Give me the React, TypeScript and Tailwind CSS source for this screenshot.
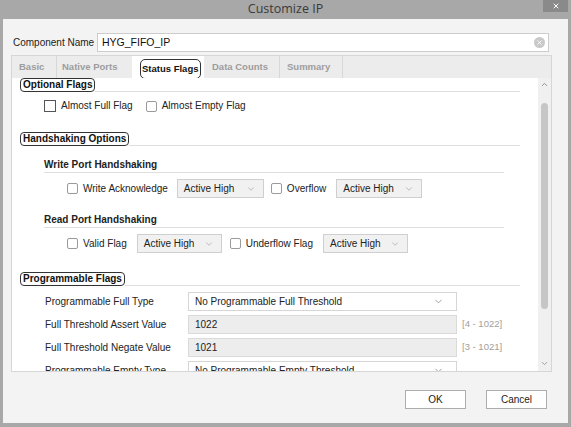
import { ChevronDown, ChevronUp, X } from 'lucide-react';

const font = { fontFamily: '"Liberation Sans", Arial, sans-serif' };

function Check({ dark = false, label }: { dark?: boolean; label: string }) {
  return (
    <div className="flex items-center gap-[5px] whitespace-nowrap">
      <span
        className={
          dark
            ? 'w-[12px] h-[12px] border border-[#555] bg-white'
            : 'w-[11px] h-[11px] border border-[#9a9a9a] rounded-[2px] bg-white'
        }
      />
      <span className="text-[10px] leading-[12px] text-[#222]">{label}</span>
    </div>
  );
}

function Select({ value, w }: { value: string; w: string }) {
  return (
    <div className={`${w} h-[19px] flex items-center justify-between border border-[#cfcfcf] bg-[#f1f1f1] pl-[6px] pr-[7px]`}>
      <span className="text-[10px] text-[#222] whitespace-nowrap">{value}</span>
      <ChevronDown className="w-[10px] h-[10px] text-[#9a9a9a]" strokeWidth={1.5} />
    </div>
  );
}

function SectionLabel({ children }: { children: string }) {
  return (
    <div className="flex items-end h-[14px]">
      <span className="border-[1.5px] border-[#333] rounded-[4px] px-[2px] h-[14px] flex items-center text-[10px] font-bold text-[#111] leading-none whitespace-nowrap">
        {children}
      </span>
      <div className="flex-1 h-px bg-[#dedede] mr-[18px]" />
    </div>
  );
}

function SubHeader({ children }: { children: string }) {
  return (
    <div className="ml-[24px] mr-[34px] border-b border-[#dedede] pb-[1px] text-[10px] leading-[12px] font-bold text-[#222] whitespace-nowrap">
      {children}
    </div>
  );
}

function FieldRow({ label, children, hint }: { label: string; children: React.ReactNode; hint?: string }) {
  return (
    <div className="flex items-center pl-[25px]">
      <span className="w-[143px] text-[10px] text-[#222] whitespace-nowrap">{label}</span>
      {children}
      {hint && <span className="ml-[5px] text-[9.5px] text-[#a0a0a0] whitespace-nowrap">{hint}</span>}
    </div>
  );
}

function ValueBox({ value }: { value: string }) {
  return (
    <div className="w-[269px] h-[19px] border border-[#dadada] bg-[#ededed] flex items-center pl-[6px] text-[10px] text-[#222]">
      {value}
    </div>
  );
}

function TypeSelect({ value }: { value: string }) {
  return (
    <div className="w-[269px] h-[19px] border border-[#d6d6d6] bg-white flex items-center justify-between pl-[6px] pr-[12px]">
      <span className="text-[10px] text-[#222] whitespace-nowrap">{value}</span>
      <ChevronDown className="w-[11px] h-[11px] text-[#777]" strokeWidth={1.5} />
    </div>
  );
}

export default function App() {
  return (
    <div className="w-[571px] h-[427px] bg-[#a8a8a8] flex flex-col" style={font}>
      {/* Title bar */}
      <div className="relative h-[19px] flex items-center justify-center">
        <span className="text-[12.5px] text-[#3a3a3a]" style={{ fontFamily: '"Open Sans", sans-serif' }}>
          Customize IP
        </span>
        <div className="absolute right-[3px] top-0 w-[25px] h-[12px] bg-[#8a8a8a] flex items-center justify-center">
          <X className="w-[8px] h-[8px] text-white" strokeWidth={3} />
        </div>
      </div>

      {/* Dialog body */}
      <div className="flex-1 ml-[3px] mr-[3px] mb-[4px] bg-[#f3f3f3] flex flex-col">
        <div className="flex items-center h-[19px] mt-[14px] pl-[10px] pr-[19px]">
          <span className="text-[10px] text-[#222] w-[84px] whitespace-nowrap">Component Name</span>
          <div className="flex-1 h-[19px] border border-[#cdcdcd] bg-white flex items-center justify-between pl-[4px] pr-[3px]">
            <span className="text-[10.5px] text-[#111]">HYG_FIFO_IP</span>
            <span className="w-[11px] h-[11px] rounded-full bg-[#c9c9c9] flex items-center justify-center">
              <X className="w-[7px] h-[7px] text-white" strokeWidth={3} />
            </span>
          </div>
        </div>

        {/* Tab panel */}
        <div className="mt-[3px] ml-[8px] w-[541px] h-[317px] border border-[#d6d6d6] flex flex-col">
          <div className="h-[22px] shrink-0 bg-[#ececec] flex items-stretch text-[9.5px] font-bold text-[#9d9d9d] whitespace-nowrap">
            <div className="w-[45px] flex items-center pl-[7px] border-r border-[#d8d8d8]">Basic</div>
            <div className="w-[75px] flex items-center pl-[5px]">Native Ports</div>
            <div className="w-[72px] bg-white flex items-start pl-[8px]">
              <span className="border-[1.5px] border-[#333] rounded-[5px] h-[20px] px-[1px] flex items-center text-[#111] mt-[3px]">
                Status Flags
              </span>
            </div>
            <div className="w-[76px] flex items-center pl-[8px] border-r border-[#d8d8d8]">Data Counts</div>
            <div className="w-[63px] flex items-center pl-[7px] border-r border-[#d8d8d8]">Summary</div>
          </div>

          <div className="flex-1 flex overflow-hidden">
            <div className="flex-1 bg-white pl-[8px] overflow-hidden">
              <SectionLabel>Optional Flags</SectionLabel>
              <div className="flex items-center gap-[13px] pl-[24px] mt-[8px] h-[12px]">
                <Check dark label="Almost Full Flag" />
                <Check label="Almost Empty Flag" />
              </div>

              <div className="mt-[20px]">
                <SectionLabel>Handshaking Options</SectionLabel>
              </div>
              <div className="mt-[13px]">
                <SubHeader>Write Port Handshaking</SubHeader>
              </div>
              <div className="flex items-center pl-[47px] mt-[6px] h-[19px]">
                <Check label="Write Acknowledge" />
                <div className="ml-[9px]">
                  <Select value="Active High" w="w-[87px]" />
                </div>
                <div className="ml-[7px]">
                  <Check label="Overflow" />
                </div>
                <div className="ml-[10px]">
                  <Select value="Active High" w="w-[86px]" />
                </div>
              </div>

              <div className="mt-[16px]">
                <SubHeader>Read Port Handshaking</SubHeader>
              </div>
              <div className="flex items-center pl-[47px] mt-[6px] h-[19px]">
                <Check label="Valid Flag" />
                <div className="ml-[10px]">
                  <Select value="Active High" w="w-[85px]" />
                </div>
                <div className="ml-[8px]">
                  <Check label="Underflow Flag" />
                </div>
                <div className="ml-[10px]">
                  <Select value="Active High" w="w-[85px]" />
                </div>
              </div>

              <div className="mt-[19px]">
                <SectionLabel>Programmable Flags</SectionLabel>
              </div>
              <div className="flex flex-col gap-[4px] mt-[6px]">
                <FieldRow label="Programmable Full Type">
                  <TypeSelect value="No Programmable Full Threshold" />
                </FieldRow>
                <FieldRow label="Full Threshold Assert Value" hint="[4 - 1022]">
                  <ValueBox value="1022" />
                </FieldRow>
                <FieldRow label="Full Threshold Negate Value" hint="[3 - 1021]">
                  <ValueBox value="1021" />
                </FieldRow>
                <FieldRow label="Programmable Empty Type">
                  <TypeSelect value="No Programmable Empty Threshold" />
                </FieldRow>
              </div>
            </div>

            {/* Scrollbar */}
            <div className="w-[13px] bg-[#f0f0f0] flex flex-col items-center">
              <ChevronUp className="w-[9px] h-[9px] text-[#777] mt-[2px]" strokeWidth={2} />
              <div className="w-[7px] h-[206px] mt-[14px] rounded-full bg-[#c6c6c6]" />
              <div className="flex-1" />
              <ChevronDown className="w-[9px] h-[9px] text-[#888] mb-[3px]" strokeWidth={2} />
            </div>
          </div>
        </div>

        {/* Buttons */}
        <div className="flex justify-end gap-[20px] pr-[21px] mt-[18px]">
          <button className="w-[61px] h-[19px] border border-[#adadad] bg-white text-[10px] text-[#222]">OK</button>
          <button className="w-[61px] h-[19px] border border-[#adadad] bg-white text-[10px] text-[#222]">Cancel</button>
        </div>
      </div>
    </div>
  );
}
